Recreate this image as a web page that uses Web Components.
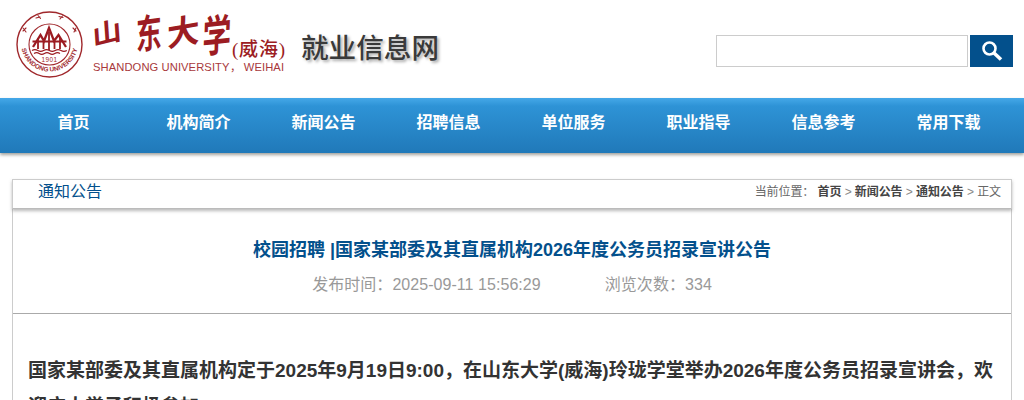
<!DOCTYPE html>
<html lang="zh-CN">
<head>
<meta charset="utf-8">
<title>就业信息网</title>
<style>
html,body{margin:0;padding:0;background:#fff;font-family:"Liberation Sans","Noto Sans CJK SC",sans-serif}
</style>
</head>
<body>
<site-header></site-header>
<site-nav>
  <a>首页</a><a>机构简介</a><a>新闻公告</a><a>招聘信息</a><a>单位服务</a><a>职业指导</a><a>信息参考</a><a>常用下载</a>
</site-nav>
<article-panel>
  <span slot="section">通知公告</span>
  <span slot="crumb">当前位置：</span>
  <h1 slot="title">校园招聘 |国家某部委及其直属机构2026年度公务员招录宣讲公告</h1>
  <p>国家某部委及其直属机构定于2025年9月19日9:00，在山东大学(威海)玲珑学堂举办2026年度公务员招录宣讲会，欢迎广大学子积极参加。</p>
</article-panel>
<script>
const FONT='"Liberation Sans","Noto Sans CJK SC",sans-serif';
class SiteHeader extends HTMLElement{
  constructor(){super();
    this.attachShadow({mode:'open'}).innerHTML=`
<style>
:host{display:flex;height:98px;align-items:flex-start;justify-content:space-between;font-family:${FONT}}
.brand{display:flex;align-items:flex-start}
svg.logo{display:block;width:290px;height:98px;flex:none}
.site{margin:33px 0 0 11px;font-size:27.6px;line-height:32px;font-weight:500;color:#3a3a3a;white-space:nowrap;text-shadow:2px 2px 3px #aaa}
.search{display:flex;gap:2px;margin:35px 11px 0 0}
.box{box-sizing:border-box;width:252px;height:32px;border:1px solid #ccc;background:#fff}
.btn{width:43px;height:32px;background:#03508c;display:flex;align-items:center;justify-content:center}
</style>
<div class="brand">
<svg class="logo" viewBox="0 0 290 98" fill="none">
  <defs><path id="arc" d="M21 43 A28.500 28.500 0 0 0 78 43"/></defs>
  <g stroke="#a0282c">
    <circle cx="49.500" cy="44.500" r="32.500" stroke-width="1.400"/>
    <circle cx="49.500" cy="44.500" r="20.500" stroke-width="1.100"/>
  </g>
  <text font-family="Liberation Sans" font-size="6.400" font-weight="700" fill="#a0282c"><textPath href="#arc" startOffset="50%" text-anchor="middle">SHANDONG UNIVERSITY</textPath></text>
  <g stroke="#a0282c" stroke-width="1.100" stroke-linecap="round">
    <path d="M36 18l4-1M38 15.500l2.500 3M59 16.500l4 1M60 19l2.500-3M23 31l3-3M23 28l3 4M73 28l3 3M74 32l2-4"/>
  </g>
  <g stroke="#9c1c22" stroke-linejoin="miter">
    <path stroke-width="2.300" d="M33 47 40.500 35 44 41 49 28 54 41 58.500 35 66 47"/>
    <path stroke-width="1.800" d="M32.500 41.500h34M38 38v11M43.500 42v7M49 32v18M54.500 42v7M60 38v11"/>
    <path stroke-width="1.200" d="M32 50.500q2.900-1.800 5.800 0t5.800 0 5.800 0 5.800 0 5.800 0 5.800 0M34 53.500q2.600-1.600 5.200 0t5.200 0 5.200 0 5.200 0 5.200 0"/>
  </g>
  <text x="49.500" y="62" font-family="Liberation Sans" font-size="6.400" fill="#a0282c" text-anchor="middle" letter-spacing=".4">1901</text>
  <g font-family="Noto Sans CJK SC" font-weight="700" fill="#9c1c22">
    <text transform="translate(93 46) rotate(-14) skewX(-10) scale(1,.85)" font-size="30">山</text>
    <text transform="translate(136 50) rotate(-8) skewX(-8) scale(.72,1.1)" font-size="36">东</text>
    <text transform="translate(167 47) rotate(-10) skewX(-10)" font-size="33">大</text>
    <text transform="translate(202 53) rotate(-6) skewX(-8) scale(.8,1.2)" font-size="36">学</text>
    <text x="232" y="56" font-family="Liberation Serif,Noto Sans CJK SC" font-size="19" font-weight="500" textLength="53">(威海)</text>
  </g>
  <text x="93" y="71" font-family="Liberation Sans" font-size="11.200" fill="#a8383c" textLength="191">SHANDONG UNIVERSITY， WEIHAI</text>
</svg>
<div class="site">就业信息网</div>
</div>
<div class="search">
  <div class="box"></div>
  <div class="btn"><svg width="24" height="24" viewBox="0 0 24 24" fill="none" stroke="#fff"><circle cx="9.500" cy="9.500" r="6" stroke-width="2.600"/><path d="M14 14l7 6.500" stroke-width="3.600"/></svg></div>
</div>`;
  }
}
class SiteNav extends HTMLElement{
  constructor(){super();
    this.attachShadow({mode:'open'}).innerHTML=`
<style>
:host{display:block;height:55px;background:linear-gradient(#45a8e8 0,#2e93d6 8px,#2079b9 100%);box-shadow:0 2px 3px rgba(90,90,80,.55)}
.in{display:grid;grid-template-columns:repeat(8,125px);width:1000px;margin:0 0 0 11px;height:55px}
::slotted(a){display:block;text-align:center;color:#fff;font:700 16px/50px ${FONT}}
</style><div class="in"><slot></slot></div>`;
  }
}
class ArticlePanel extends HTMLElement{
  constructor(){super();
    this.attachShadow({mode:'open'}).innerHTML=`
<style>
:host{display:block;box-sizing:border-box;width:1000px;margin:26px 0 0 12px;font-family:${FONT}}
.bar{display:flex;justify-content:space-between;box-sizing:border-box;height:30px;border:1px solid #ccc;border-bottom-color:#bbb;padding:0 10px 0 25px;align-items:flex-start;box-shadow:0 2px 3px rgba(120,120,120,.5);position:relative;background:#fff}
::slotted([slot=section]){font-size:16px;color:#03508c;line-height:24px}
.path{font-size:12px;line-height:25px;color:#666;white-space:nowrap;letter-spacing:-.08px}
b{color:#444;font-weight:700}
.sep{color:#888}
.main{box-sizing:border-box;border:solid #ccc;border-width:0 1px}
.head{height:104px;border-bottom:1px solid #aaa;text-align:center;overflow:hidden}
::slotted(h1){margin:29px 0 0;font-size:18px;line-height:24px;font-weight:700;color:#03508c}
.meta{display:flex;justify-content:center;gap:64px;margin-top:11px;font-size:16px;line-height:24px;color:#999;letter-spacing:.05px}
.body{padding:39px 15px 0 15px}
::slotted(p){margin:0;font-size:19px;line-height:36px;font-weight:700;color:#333}
</style>
<div class="bar"><slot name="section"></slot>
<div class="path"><slot name="crumb"></slot>&nbsp;<b>首页</b> <span class="sep">&gt;</span> <b>新闻公告</b> <span class="sep">&gt;</span> <b>通知公告</b> <span class="sep">&gt;</span> 正文</div></div>
<div class="main">
  <div class="head"><slot name="title"></slot>
    <div class="meta"><span>发布时间：2025-09-11 15:56:29</span><span>浏览次数：334</span></div>
  </div>
  <div class="body"><slot></slot></div>
</div>`;
  }
}
customElements.define('site-header',SiteHeader);
customElements.define('site-nav',SiteNav);
customElements.define('article-panel',ArticlePanel);
</script>
</body>
</html>
